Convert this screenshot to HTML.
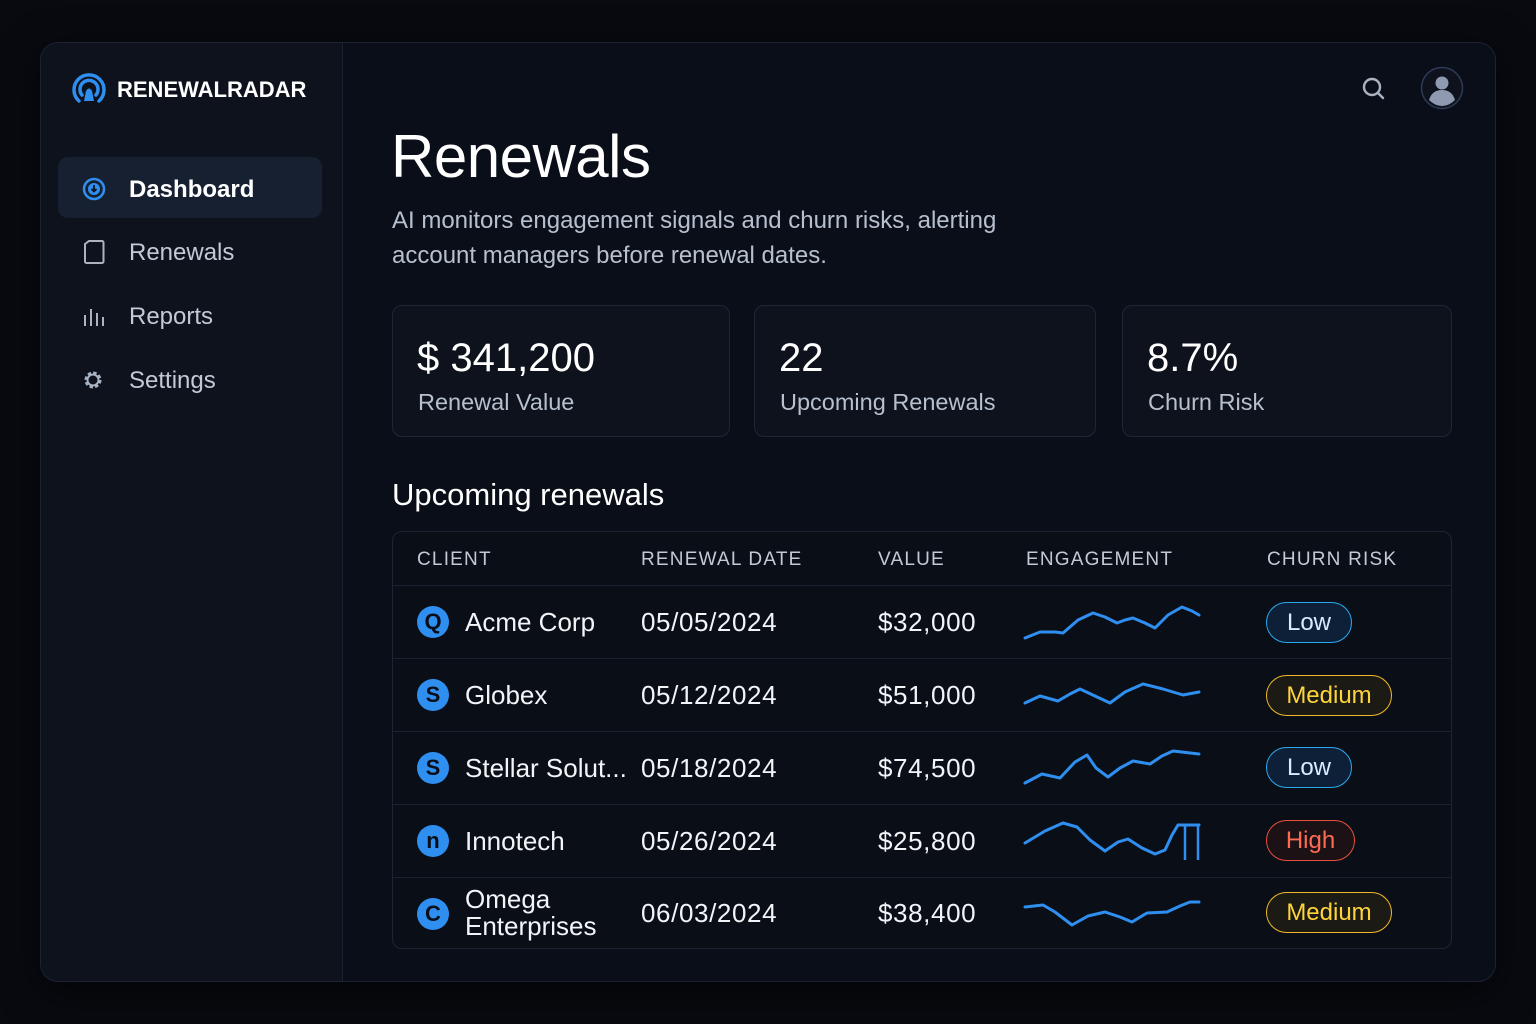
<!DOCTYPE html>
<html><head><meta charset="utf-8"><style>
*{margin:0;padding:0;box-sizing:border-box}
body{width:1536px;height:1024px;background:#080a10;font-family:"Liberation Sans",sans-serif;color:#f2f4f8;position:relative;overflow:hidden}
.a{position:absolute;white-space:nowrap}
#frame{position:absolute;left:40px;top:42px;width:1456px;height:940px;border-radius:18px;background:#0a0e18;border:1px solid #1c2433;overflow:hidden;box-shadow:0 10px 40px rgba(0,0,0,.6)}
#side{position:absolute;left:0;top:0;width:302px;height:100%;background:#0d121d;border-right:1px solid #1a2130}
.card{position:absolute;top:305px;height:132px;border:1px solid #1e2636;border-radius:10px;background:#0d121c}
.card .v{position:absolute;left:24px;top:30px;font-size:40px;color:#fff}
.card .l{position:absolute;left:25px;top:83px;font-size:23.5px;color:#b7c0cf}
.th{position:absolute;top:549px;font-size:19px;letter-spacing:1.2px;color:#c3cad6}
.td{position:absolute;font-size:26px;color:#f2f4f8}
.dt{position:absolute;font-size:26px;color:#f2f4f8;letter-spacing:.6px}
.row{position:absolute;left:393px;width:1058px;height:1px;background:#1a2130}
.ic{position:absolute;left:417px;width:32px;height:32px;border-radius:50%;background:#2f8ff0;color:#0a0e18;font-weight:bold;font-size:22px;text-align:center;line-height:32px}
.pill{position:absolute;height:41px;border-radius:21px;font-size:24px;line-height:39px;text-align:center;border:1.5px solid}
.low{border-color:#2aa9ee;background:#0e2038;color:#d8ecff;width:86px}
.med{border-color:#f0b92a;background:#1b1a14;color:#ffd43a;width:126px}
.high{border-color:#e8503e;background:#1c1216;color:#ff6a52;width:89px}
</style></head><body>
<div id="frame"><div id="side"></div></div>

<svg class="a" style="left:71px;top:71px" width="36" height="36" viewBox="0 0 36 36">
<path d="M8 30 A15 15 0 1 1 28 30" fill="none" stroke="#2f8ff0" stroke-width="3.5" stroke-linecap="round"/>
<path d="M11 24 A9 9 0 1 1 25 24" fill="none" stroke="#2f8ff0" stroke-width="3.5" stroke-linecap="round"/>
<path d="M13 30 L15 20 Q18 15 21 20 L23 30" fill="#2f8ff0"/>
</svg>
<div class="a" style="left:117px;top:77px;font-size:22px;font-weight:bold;color:#fff">RENEWALRADAR</div>

<div class="a" style="left:58px;top:157px;width:264px;height:61px;border-radius:10px;background:#172030"></div>
<svg class="a" style="left:82px;top:177px" width="24" height="24" viewBox="0 0 24 24"><circle cx="12" cy="12" r="10" fill="none" stroke="#2f8ff0" stroke-width="2.5"/><circle cx="12" cy="12" r="6" fill="#2f8ff0"/><path d="M12 8v6M9.5 12l2.5 2.5 2.5-2.5" stroke="#0d121d" stroke-width="1.8" fill="none"/></svg>
<div class="a" style="left:129px;top:176px;font-size:24px;font-weight:bold;color:#fff">Dashboard</div>
<svg class="a" style="left:83px;top:240px" width="22" height="24" viewBox="0 0 22 24"><path d="M2 4 L6 1 H19 a1.5 1.5 0 0 1 1.5 1.5 V21.5 a1.5 1.5 0 0 1-1.5 1.5 H3.5 a1.5 1.5 0 0 1-1.5-1.5Z" fill="none" stroke="#aab3c2" stroke-width="2"/></svg>
<div class="a" style="left:129px;top:239px;font-size:24px;color:#c3cad6">Renewals</div>
<svg class="a" style="left:83px;top:305px" width="22" height="22" viewBox="0 0 22 22"><path d="M2 10v11M8 4v17M14 8v13M20 12v9" stroke="#aab3c2" stroke-width="2"/></svg>
<div class="a" style="left:129px;top:303px;font-size:24px;color:#c3cad6">Reports</div>
<svg class="a" style="left:82px;top:369px" width="22" height="22" viewBox="0 0 22 22"><circle cx="11" cy="11" r="7" fill="none" stroke="#aab3c2" stroke-width="3" stroke-dasharray="3.3 2.2"/><circle cx="11" cy="11" r="5.5" fill="none" stroke="#aab3c2" stroke-width="2"/></svg>
<div class="a" style="left:129px;top:367px;font-size:24px;color:#c3cad6">Settings</div>

<svg class="a" style="left:1361px;top:76px" width="26" height="26" viewBox="0 0 26 26"><circle cx="11" cy="11" r="8" fill="none" stroke="#aab3c2" stroke-width="2.4"/><path d="M17 17l5 5" stroke="#aab3c2" stroke-width="2.4" stroke-linecap="round"/></svg>
<svg class="a" style="left:1420px;top:66px" width="44" height="44" viewBox="0 0 44 44"><circle cx="22" cy="22" r="20.5" fill="#0d121d" stroke="#2c3a55" stroke-width="1.5"/><circle cx="22" cy="17" r="6.5" fill="#8f9ab0"/><path d="M9 34 Q12 24 22 24 Q32 24 35 34 Q29 40 22 40 Q15 40 9 34Z" fill="#8f9ab0"/></svg>

<div class="a" style="left:391px;top:122px;font-size:60px;color:#fff;letter-spacing:-.5px">Renewals</div>
<div class="a" style="left:392px;top:203px;font-size:24px;line-height:35px;color:#b7c0cf">AI monitors engagement signals and churn risks, alerting<br>account managers before renewal dates.</div>

<div class="card" style="left:392px;width:338px"><div class="v">$ 341,200</div><div class="l">Renewal Value</div></div>
<div class="card" style="left:754px;width:342px"><div class="v">22</div><div class="l">Upcoming Renewals</div></div>
<div class="card" style="left:1122px;width:330px"><div class="v">8.7%</div><div class="l">Churn Risk</div></div>

<div class="a" style="left:392px;top:477px;font-size:31px;color:#fff">Upcoming renewals</div>

<div class="a" style="left:392px;top:531px;width:1060px;height:418px;border:1px solid #1c2433;border-radius:10px;background:#0a0e17"></div>
<div class="th" style="left:417px">CLIENT</div>
<div class="th" style="left:641px">RENEWAL DATE</div>
<div class="th" style="left:878px">VALUE</div>
<div class="th" style="left:1026px">ENGAGEMENT</div>
<div class="th" style="left:1267px">CHURN RISK</div>
<div class="row" style="top:585px"></div>
<div class="row" style="top:658px"></div>
<div class="row" style="top:731px"></div>
<div class="row" style="top:804px"></div>
<div class="row" style="top:877px"></div>

<div class="ic" style="top:606px">Q</div><div class="td" style="left:465px;top:607px">Acme Corp</div>
<div class="ic" style="top:679px">S</div><div class="td" style="left:465px;top:680px">Globex</div>
<div class="ic" style="top:752px">S</div><div class="td" style="left:465px;top:753px">Stellar Solut...</div>
<div class="ic" style="top:825px">n</div><div class="td" style="left:465px;top:826px">Innotech</div>
<div class="ic" style="top:898px">C</div><div class="td" style="left:465px;top:886px;line-height:27px">Omega<br>Enterprises</div>

<div class="dt" style="left:641px;top:607px">05/05/2024</div>
<div class="dt" style="left:641px;top:680px">05/12/2024</div>
<div class="dt" style="left:641px;top:753px">05/18/2024</div>
<div class="dt" style="left:641px;top:826px">05/26/2024</div>
<div class="dt" style="left:641px;top:898px">06/03/2024</div>

<div class="dt" style="left:878px;top:607px">$32,000</div>
<div class="dt" style="left:878px;top:680px">$51,000</div>
<div class="dt" style="left:878px;top:753px">$74,500</div>
<div class="dt" style="left:878px;top:826px">$25,800</div>
<div class="dt" style="left:878px;top:898px">$38,400</div>

<svg class="a" style="left:0;top:0" width="1536" height="1024">
<g fill="none" stroke="#2f8ff0" stroke-width="3" stroke-linejoin="round" stroke-linecap="round">
<polyline points="1025,638 1040,632 1055,632 1063,633 1078,620 1093,613 1105,617 1117,623 1125,620 1133,618 1145,623 1155,628 1168,615 1182,607 1192,611 1199,615"/>
<polyline points="1025,703 1040,696 1058,701 1070,694 1080,689 1095,696 1110,703 1125,692 1143,684 1163,689 1183,695 1199,692"/>
<polyline points="1025,783 1042,774 1060,778 1075,762 1087,755 1096,768 1108,777 1120,768 1133,761 1150,764 1162,756 1173,751 1199,754"/>
<polyline points="1025,843 1045,831 1063,823 1077,827 1090,840 1105,851 1118,842 1128,839 1142,848 1155,854 1165,850 1172,835 1178,825 1199,825"/>
<polyline points="1025,907 1043,905 1055,912 1072,925 1088,916 1105,912 1120,917 1132,922 1147,913 1167,912 1180,906 1190,902 1199,902"/>
</g>
<path d="M1185 825V860M1198 825V860" stroke="#2f8ff0" stroke-width="2.5"/>
</svg>

<div class="pill low" style="left:1266px;top:602px">Low</div>
<div class="pill med" style="left:1266px;top:675px">Medium</div>
<div class="pill low" style="left:1266px;top:747px">Low</div>
<div class="pill high" style="left:1266px;top:820px">High</div>
<div class="pill med" style="left:1266px;top:892px">Medium</div>
</body></html>
